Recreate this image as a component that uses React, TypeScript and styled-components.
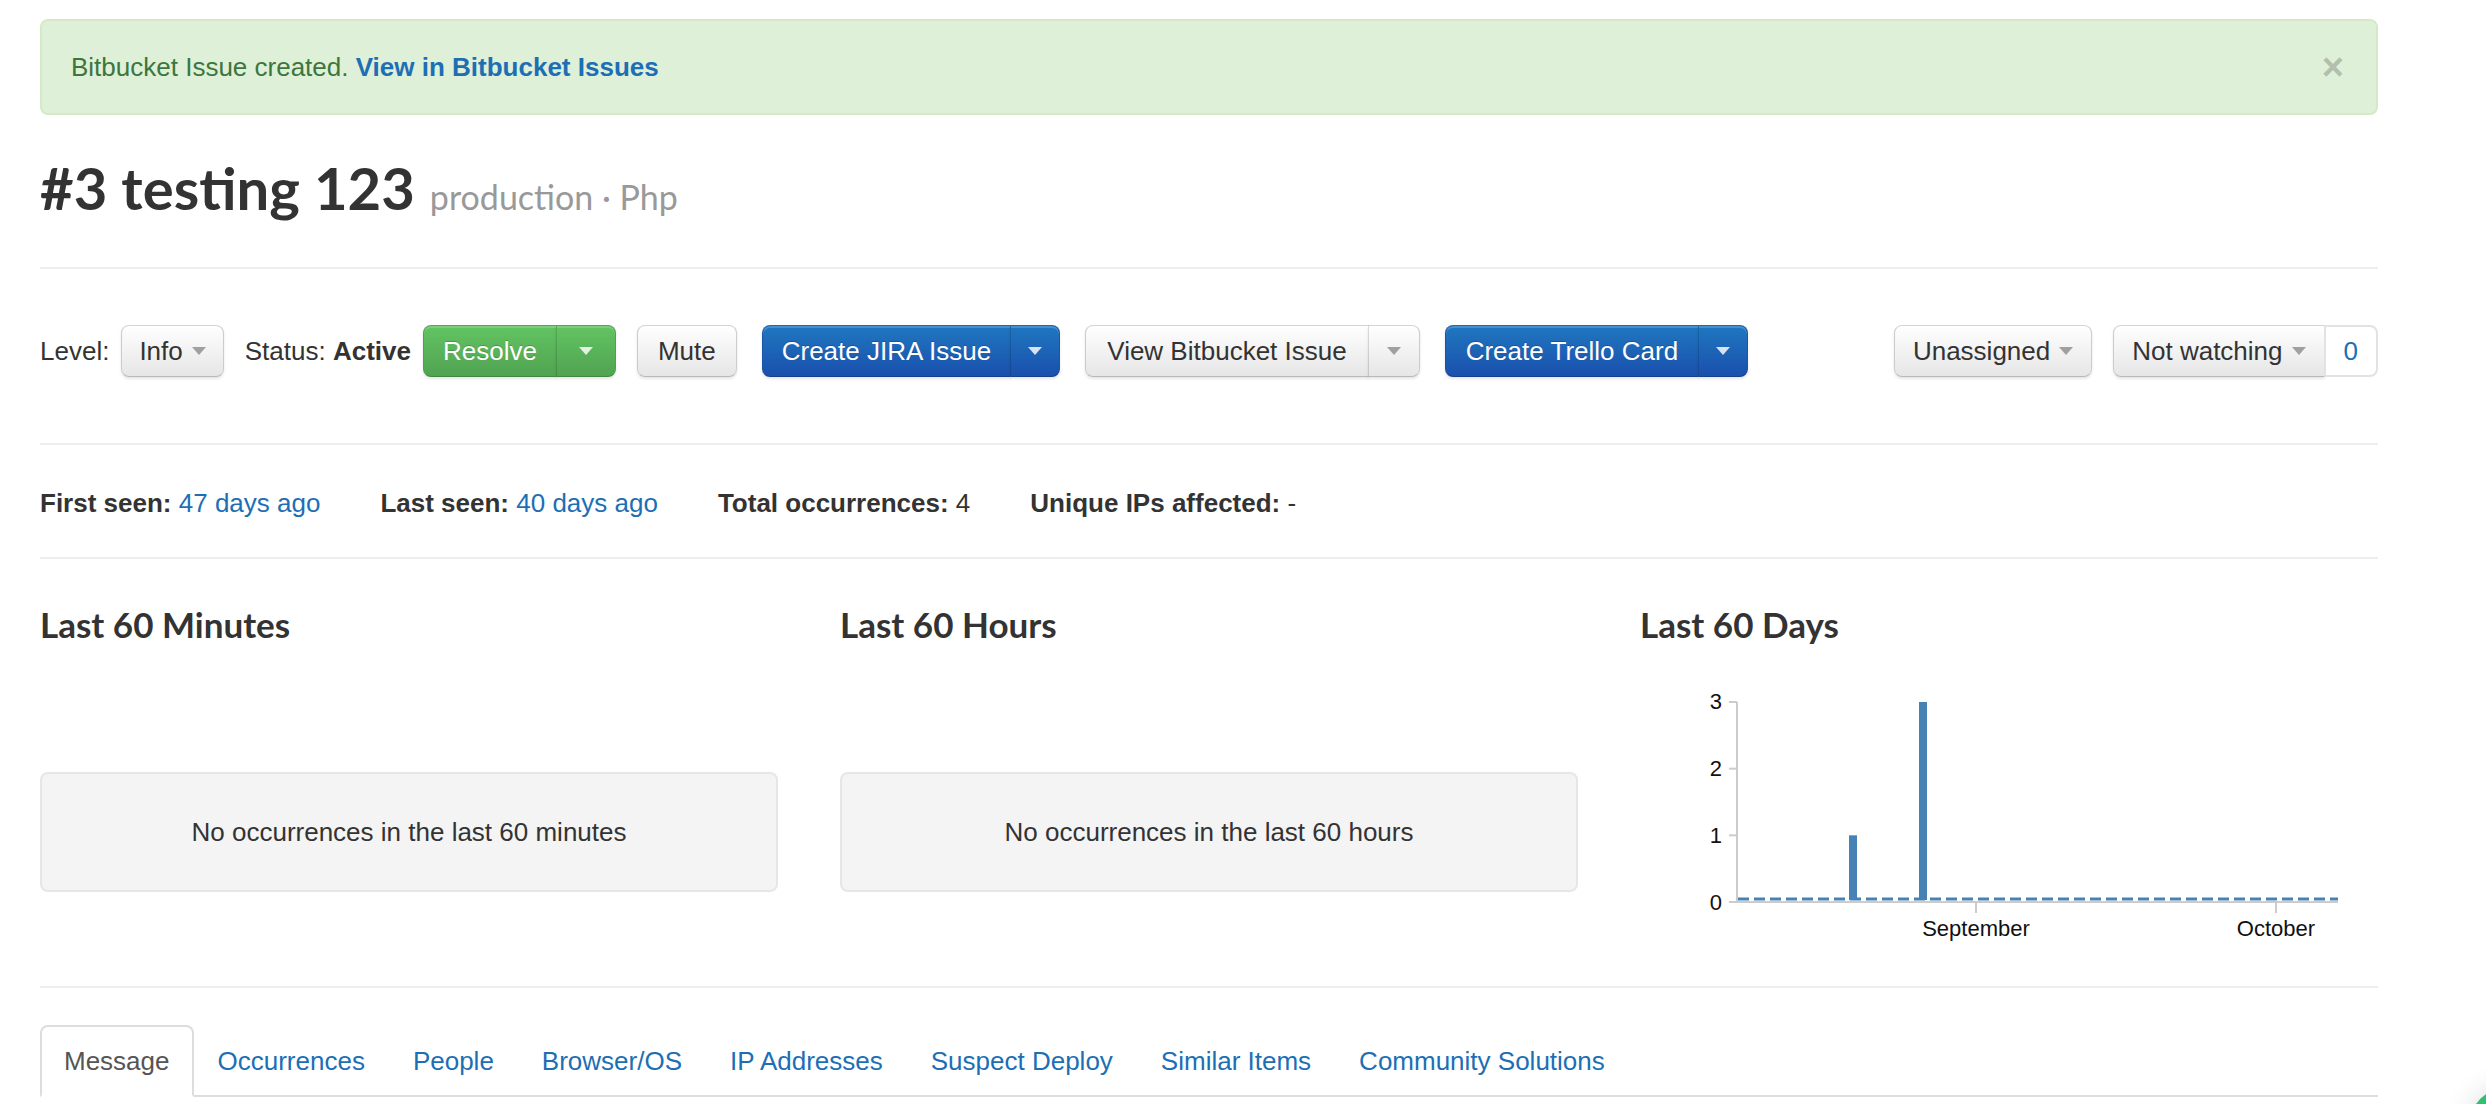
import React from "react";
import styled, { createGlobalStyle, css } from "styled-components";

const GlobalStyle = createGlobalStyle`
  html, body { margin: 0; padding: 0; background: #fff; }
  body {
    font-family: "Liberation Sans", Arial, Helvetica, sans-serif;
    font-size: 26px;
    color: #333;
  }
  * { box-sizing: border-box; }
`;

const BLUE = "#1c6fb4";

const Page = styled.div`
  width: 2338px;
  margin-left: 40px;
  padding-top: 19px;
`;

const Alert = styled.div`
  height: 96px;
  display: flex;
  align-items: center;
  justify-content: space-between;
  padding: 0 32px 0 29px;
  background: #dff0d8;
  border: 2px solid #d6e9c6;
  border-radius: 8px;
  color: #3c763d;
  line-height: 30px;
`;

const AlertLink = styled.a`
  font-weight: bold;
  color: ${BLUE};
  text-decoration: none;
`;

const Close = styled.span`
  font-size: 38px;
  font-weight: bold;
  color: #000;
  opacity: 0.2;
  line-height: 1;
`;

const Header = styled.header`
  padding: 41px 0 47px;
  border-bottom: 2px solid #eee;
`;

const Title = styled.h1`
  margin: 0;
  height: 64px;
  display: flex;
  align-items: baseline;
  gap: 15px;
  font-family: Lato, "Open Sans", sans-serif;
  font-weight: 700;
  font-size: 58px;
  line-height: 64px;
  color: #333;
  white-space: nowrap;
`;

const Sub = styled.small`
  font-size: 34px;
  font-weight: 400;
  color: #999;
`;

const Toolbar = styled.div`
  display: flex;
  align-items: center;
  gap: 21px;
  padding: 56px 0 66px;
  border-bottom: 2px solid #eee;
`;

const Field = styled.div`
  display: flex;
  align-items: center;
  gap: 12px;
`;

const Label = styled.span`
  line-height: 30px;
  white-space: nowrap;
`;

const RightCluster = styled.div`
  margin-left: auto;
  display: flex;
  align-items: center;
  gap: 21px;
`;

type Variant = "default" | "success" | "primary";

const variants: Record<Variant, ReturnType<typeof css>> = {
  default: css`
    color: #333;
    background: linear-gradient(#ffffff, #e6e6e6);
    border-color: #d4d4d4 #cccccc #b8b8b8;
  `,
  success: css`
    color: #fff;
    background: linear-gradient(#62c462, #51a351);
    border-color: #55a955 #4f9f4f #3f8a3f;
    text-shadow: 0 -1px 0 rgba(0, 0, 0, 0.2);
  `,
  primary: css`
    color: #fff;
    background: linear-gradient(#1f77c0, #1a50ad);
    border-color: #1d68b5 #1a55a8 #163f8c;
    text-shadow: 0 -1px 0 rgba(0, 0, 0, 0.2);
  `,
};

const Btn = styled.button<{ $variant: Variant; $part?: "main" | "caret"; $pad?: number }>`
  height: 52px;
  display: inline-flex;
  align-items: center;
  gap: 9px;
  padding: 0 ${(p) => p.$pad ?? 19}px;
  margin: 0;
  font: inherit;
  font-size: 26px;
  line-height: 30px;
  border: 1px solid;
  border-radius: 8px;
  white-space: nowrap;
  cursor: pointer;
  box-shadow: inset 0 2px 0 rgba(255, 255, 255, 0.18), 0 2px 3px rgba(0, 0, 0, 0.1);
  ${(p) => variants[p.$variant]}
  ${(p) =>
    p.$part === "main" &&
    css`
      border-top-right-radius: 0;
      border-bottom-right-radius: 0;
    `}
  ${(p) =>
    p.$part === "caret" &&
    css`
      border-top-left-radius: 0;
      border-bottom-left-radius: 0;
      border-left: 1px solid rgba(0, 0, 0, 0.14);
      margin-left: -1px;
    `}
`;

const Split = styled.div<{ $spaced?: boolean }>`
  display: inline-flex;
  margin-left: ${(p) => (p.$spaced ? 4 : 0)}px;
`;

const Caret = styled.span<{ $light?: boolean }>`
  display: inline-block;
  width: 0;
  height: 0;
  border-left: 7px solid transparent;
  border-right: 7px solid transparent;
  border-top: 8px solid ${(p) => (p.$light ? "rgba(255,255,255,0.82)" : "#a0a0a0")};
`;

const Count = styled.a`
  height: 52px;
  display: inline-flex;
  align-items: center;
  padding: 0 18px;
  margin-left: -1px;
  border: 2px solid #e2e2e2;
  border-radius: 0 8px 8px 0;
  color: ${BLUE};
  background: #fff;
  text-decoration: none;
`;

const Stats = styled.div`
  display: flex;
  gap: 60px;
  padding: 43px 0 39px;
  border-bottom: 2px solid #eee;
  line-height: 30px;
`;

const Stat = styled.div`
  white-space: nowrap;
`;

const StatLink = styled.a`
  color: ${BLUE};
  text-decoration: none;
`;

const Charts = styled.section`
  display: grid;
  grid-template-columns: repeat(3, 738px);
  column-gap: 62px;
  padding: 45px 0 30px;
  border-bottom: 2px solid #eee;
`;

const ChartCol = styled.div`
  display: flex;
  flex-direction: column;
`;

const ChartTitle = styled.h3`
  margin: 0;
  font-family: Lato, "Open Sans", sans-serif;
  font-weight: 700;
  font-size: 35px;
  line-height: 40px;
  color: #333;
`;

const Empty = styled.div`
  margin-top: 128px;
  height: 120px;
  display: flex;
  align-items: center;
  justify-content: center;
  background: #f4f4f4;
  border: 2px solid #e6e6e6;
  border-radius: 8px;
`;

const Plot = styled.svg`
  display: block;
  margin-top: 12px;
  font-family: "Liberation Sans", Arial, sans-serif;
  font-size: 22px;
`;

const Tabs = styled.ul`
  list-style: none;
  margin: 37px 0 0;
  padding: 0;
  display: flex;
  border-bottom: 2px solid #ddd;
`;

const Tab = styled.li`
  margin-bottom: -2px;
`;

const TabLink = styled.a<{ $active?: boolean }>`
  display: block;
  padding: 20px 22px;
  line-height: 28px;
  border: 2px solid transparent;
  border-radius: 8px 8px 0 0;
  color: ${BLUE};
  text-decoration: none;
  ${(p) =>
    p.$active &&
    css`
      color: #555;
      background: #fff;
      border-color: #ddd #ddd transparent;
    `}
`;

const Launcher = styled.div`
  position: fixed;
  right: -56px;
  bottom: -56px;
  width: 72px;
  height: 72px;
  border-radius: 50%;
  background: #2fc170;
  box-shadow: 0 0 30px rgba(0, 0, 0, 0.14);
`;

const days = Array.from({ length: 60 }, (_, i) => (i === 11 ? 1 : i === 18 ? 3 : 0));
const X0 = 98;
const DAY = 10;
const AXIS_Y = 246;
const BASE = AXIS_Y - 2;
const STEP = 66.67;
const yFor = (v: number) => AXIS_Y - v * STEP;

const DaysChart: React.FC = () => (
  <Plot width={738} height={300}>
    {[0, 1, 2, 3].map((v) => (
      <g key={v}>
        <line x1={89} x2={97} y1={yFor(v)} y2={yFor(v)} stroke="#ccc" strokeWidth={2} />
        <text x={82} y={yFor(v)} textAnchor="end" dominantBaseline="central" fill="#111">
          {v}
        </text>
      </g>
    ))}
    <line x1={97} x2={97} y1={yFor(3)} y2={AXIS_Y + 1} stroke="#ccc" strokeWidth={2} />
    <line x1={96} x2={698} y1={AXIS_Y} y2={AXIS_Y} stroke="#ccc" strokeWidth={2} />
    {[
      { x: 336, label: "September" },
      { x: 636, label: "October" },
    ].map((t) => (
      <g key={t.label}>
        <line x1={t.x} x2={t.x} y1={AXIS_Y} y2={AXIS_Y + 11} stroke="#ccc" strokeWidth={2} />
        <text x={t.x} y={AXIS_Y + 26} textAnchor="middle" dominantBaseline="central" fill="#111">
          {t.label}
        </text>
      </g>
    ))}
    <line
      x1={X0}
      x2={698}
      y1={BASE - 1}
      y2={BASE - 1}
      stroke="#4682b4"
      strokeWidth={3}
      strokeDasharray="11 5"
    />
    {days.map((v, i) =>
      v > 0 ? (
        <rect
          key={i}
          x={X0 + i * DAY + 1}
          y={yFor(v)}
          width={8}
          height={BASE - yFor(v)}
          fill="#4682b4"
        />
      ) : null
    )}
  </Plot>
);

const tabs = [
  "Message",
  "Occurrences",
  "People",
  "Browser/OS",
  "IP Addresses",
  "Suspect Deploy",
  "Similar Items",
  "Community Solutions",
];

export default function App() {
  return (
    <>
      <GlobalStyle />
      <Page>
        <Alert>
          <span>
            Bitbucket Issue created. <AlertLink href="#">View in Bitbucket Issues</AlertLink>
          </span>
          <Close>×</Close>
        </Alert>

        <Header>
          <Title>
            <span>#3 testing 123</span>
            <Sub>production · Php</Sub>
          </Title>
        </Header>

        <Toolbar>
          <Field>
            <Label>Level:</Label>
            <Btn $variant="default" $pad={17}>
              Info <Caret />
            </Btn>
          </Field>
          <Field>
            <Label>
              Status: <b>Active</b>
            </Label>
            <Split>
              <Btn $variant="success" $part="main">
                Resolve
              </Btn>
              <Btn $variant="success" $part="caret" $pad={22}>
                <Caret $light />
              </Btn>
            </Split>
          </Field>
          <Btn $variant="default" $pad={20}>
            Mute
          </Btn>
          <Split $spaced>
            <Btn $variant="primary" $part="main">
              Create JIRA Issue
            </Btn>
            <Btn $variant="primary" $part="caret" $pad={17}>
              <Caret $light />
            </Btn>
          </Split>
          <Split $spaced>
            <Btn $variant="default" $part="main" $pad={21}>
              View Bitbucket Issue
            </Btn>
            <Btn $variant="default" $part="caret" $pad={18}>
              <Caret />
            </Btn>
          </Split>
          <Split $spaced>
            <Btn $variant="primary" $part="main" $pad={20}>
              Create Trello Card
            </Btn>
            <Btn $variant="primary" $part="caret" $pad={17}>
              <Caret $light />
            </Btn>
          </Split>
          <RightCluster>
            <Btn $variant="default" $pad={18}>
              Unassigned <Caret />
            </Btn>
            <Split>
              <Btn $variant="default" $part="main" $pad={18}>
                Not watching <Caret />
              </Btn>
              <Count href="#">0</Count>
            </Split>
          </RightCluster>
        </Toolbar>

        <Stats>
          <Stat>
            <b>First seen:</b> <StatLink href="#">47 days ago</StatLink>
          </Stat>
          <Stat>
            <b>Last seen:</b> <StatLink href="#">40 days ago</StatLink>
          </Stat>
          <Stat>
            <b>Total occurrences:</b> 4
          </Stat>
          <Stat>
            <b>Unique IPs affected:</b> -
          </Stat>
        </Stats>

        <Charts>
          <ChartCol>
            <ChartTitle>Last 60 Minutes</ChartTitle>
            <Empty>No occurrences in the last 60 minutes</Empty>
          </ChartCol>
          <ChartCol>
            <ChartTitle>Last 60 Hours</ChartTitle>
            <Empty>No occurrences in the last 60 hours</Empty>
          </ChartCol>
          <ChartCol>
            <ChartTitle>Last 60 Days</ChartTitle>
            <DaysChart />
          </ChartCol>
        </Charts>

        <Tabs>
          {tabs.map((t, i) => (
            <Tab key={t}>
              <TabLink href="#" $active={i === 0}>
                {t}
              </TabLink>
            </Tab>
          ))}
        </Tabs>
      </Page>
      <Launcher />
    </>
  );
}
